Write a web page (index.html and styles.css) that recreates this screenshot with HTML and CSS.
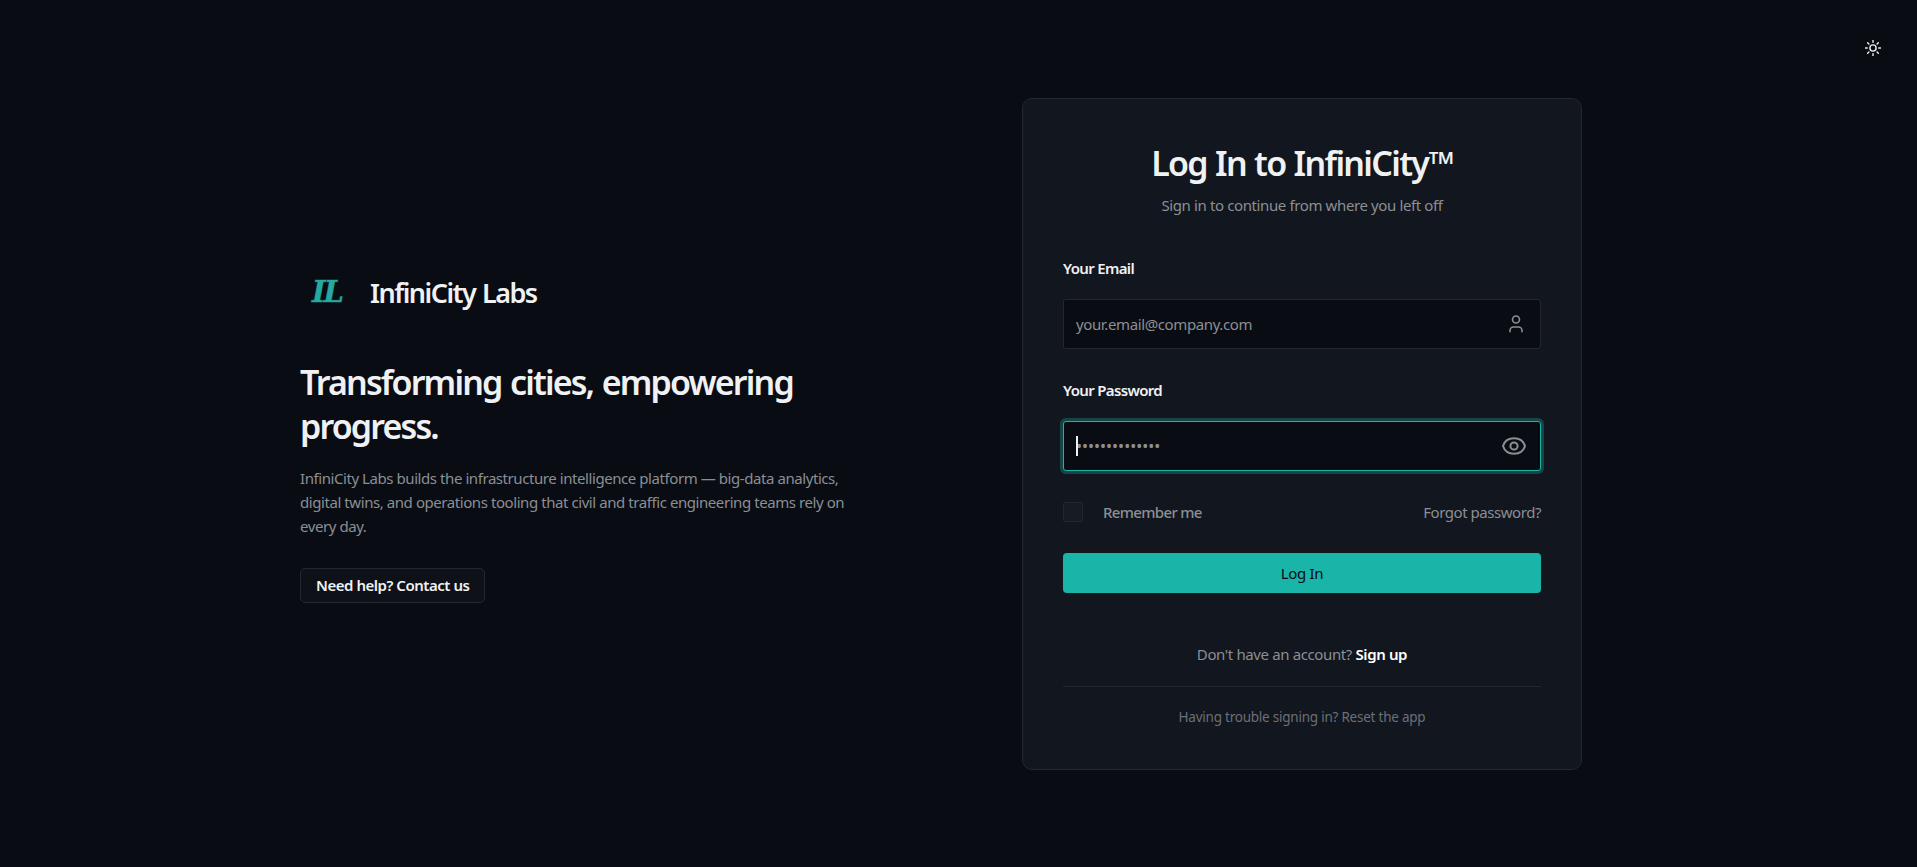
FILE: index.html
```
<!DOCTYPE html>
<html lang="en">
<head>
  <meta charset="UTF-8">
  <title>Log In - InfiniCity</title>
  <link rel="stylesheet" href="styles.css">
</head>
<body>

  <button type="button" class="theme-toggle" aria-label="Toggle theme">
    <svg width="16" height="16" viewBox="0 0 16 16" fill="none" stroke="currentColor" stroke-width="1.4" stroke-linecap="round">
      <circle cx="8" cy="8" r="3.1"/>
      <path d="M8 .5v1.700M8 13.800v1.700M.5 8h1.700M13.800 8h1.700M2.700 2.700l1.200 1.200M12.100 12.100l1.200 1.200M2.700 13.300l1.200-1.200M12.100 3.900l1.200-1.200"/>
    </svg>
  </button>

  <main class="page">
    <section class="intro">
      <div class="brand">
        <svg class="brand-logo" width="56" height="56" viewBox="0 0 56 56">
          <text x="12" y="37" textLength="32">IL</text>
        </svg>
        <span class="brand-name">InfiniCity Labs</span>
      </div>
      <h1>Transforming cities, empowering progress.</h1>
      <p>InfiniCity Labs builds the infrastructure intelligence platform — big-data analytics, digital twins, and operations tooling that civil and traffic engineering teams rely on every day.</p>
      <a class="contact" href="#">Need help? Contact us</a>
    </section>

    <section class="card">
      <h2>Log In to InfiniCity™</h2>
      <p class="subtitle">Sign in to continue from where you left off</p>

      <form>
        <label for="email">Your Email</label>
        <div class="field">
          <input type="email" id="email" placeholder="your.email@company.com">
          <svg class="icon-user" width="20" height="20" viewBox="0 0 20 20" fill="none" stroke="currentColor" stroke-width="1.6" stroke-linecap="round">
            <circle cx="10" cy="5.500" r="3.500"/>
            <path d="M4 17.700v-1.200a3.500 3.500 0 0 1 3.500-3.500h5a3.500 3.500 0 0 1 3.500 3.500v1.200"/>
          </svg>
        </div>

        <label for="password">Your Password</label>
        <div class="field field-active">
          <span class="caret"></span>
          <input type="password" id="password" placeholder="••••••••••••••">
          <svg class="icon-eye" width="24" height="24" viewBox="0 0 24 24" fill="none" stroke="currentColor" stroke-width="2">
            <path d="M1 12C2.500 7.200 6.700 4.300 12 4.300S21.500 7.200 23 12C21.500 16.800 17.300 19.700 12 19.700S2.500 16.800 1 12z"/>
            <circle cx="12" cy="12" r="3.600"/>
          </svg>
        </div>

        <div class="options">
          <label class="remember"><input type="checkbox">Remember me</label>
          <a href="#">Forgot password?</a>
        </div>

        <button type="submit" class="login-btn">Log In</button>
      </form>

      <p class="signup">Don't have an account? <a href="#">Sign up</a></p>
      <p class="trouble">Having trouble signing in? <a href="#">Reset the app</a></p>
    </section>
  </main>

</body>
</html>
```
FILE: styles.css
```
* {
  box-sizing: border-box;
}

body {
  margin: 0;
  background: #090c13;
  color: #f0f1f3;
  font-family: "Noto Sans", sans-serif;
  font-size: 15px;
  letter-spacing: -0.38px;
  line-height: 24px;
}

h1, h2, p {
  margin: 0;
}

a {
  color: inherit;
  text-decoration: none;
}

.theme-toggle {
  position: fixed;
  top: 28px;
  right: 24px;
  width: 40px;
  height: 40px;
  padding: 0;
  display: flex;
  align-items: center;
  justify-content: center;
  background: none;
  border: none;
  color: #f0f1f3;
  cursor: pointer;
}

.page {
  min-height: 100vh;
  padding: 1px 0 0 300px;
  display: flex;
  align-items: center;
  gap: 162px;
}

.intro {
  width: 560px;
}

.brand {
  display: flex;
  align-items: center;
  gap: 14px;
  margin-bottom: 39px;
}

.brand-logo text {
  font-family: "DejaVu Serif", serif;
  font-size: 29px;
  font-style: italic;
  font-weight: bold;
  letter-spacing: 0;
  fill: #25a9a1;
  stroke: #14514f;
  stroke-width: 1px;
  paint-order: stroke;
}

.brand-name {
  font-size: 27px;
  font-weight: 600;
  letter-spacing: -1.5px;
  word-spacing: 1px;
}

.intro h1 {
  font-size: 34px;
  font-weight: 600;
  line-height: 44px;
  letter-spacing: -1.85px;
  word-spacing: 1.5px;
  margin-bottom: 18px;
}

.intro p {
  color: #8b8f94;
  letter-spacing: -0.43px;
  margin-bottom: 30px;
}

.contact {
  display: inline-block;
  padding: 4px 15px 5px;
  background: #0e1118;
  border: 1px solid #23272e;
  border-radius: 5px;
  font-weight: 600;
  letter-spacing: -0.47px;
}

.card {
  width: 560px;
  height: 672px;
  padding: 40px 40px 0;
  background: #12161e;
  border: 1px solid #23272e;
  border-radius: 10px;
}

.card h2 {
  font-size: 34px;
  font-weight: 600;
  line-height: 48px;
  letter-spacing: -1.7px;
  word-spacing: 1px;
  text-align: center;
}

.subtitle {
  margin: 6px 0 39px;
  color: #8b8f94;
  text-align: center;
}

label {
  display: block;
  font-weight: 600;
  letter-spacing: -0.66px;
}

.field {
  position: relative;
  display: flex;
  align-items: center;
  height: 50px;
  margin: 19px 0 29px;
  padding: 0 14px 0 12px;
  background: #090c13;
  border: 1px solid #23272e;
  border-radius: 3px;
  color: #8b8f94;
}

.field input {
  flex: 1;
  padding: 0;
  background: none;
  border: none;
  outline: none;
  color: #f0f1f3;
  font: inherit;
  letter-spacing: inherit;
}

.field input::placeholder {
  color: #8b8f94;
  opacity: 1;
}

#password {
  font-size: 16px;
  letter-spacing: 0;
}

.field-active {
  border-color: #1ab5a9;
  box-shadow: 0 0 0 3px rgba(26, 181, 169, 0.3);
}

.caret {
  position: absolute;
  left: 12px;
  width: 2px;
  height: 20px;
  background: #f0f1f3;
}

.options {
  display: flex;
  align-items: center;
  justify-content: space-between;
  color: #8b8f94;
  letter-spacing: -0.45px;
}

.remember {
  display: flex;
  align-items: center;
  gap: 20px;
  font-weight: 500;
}

.remember input {
  appearance: none;
  width: 20px;
  height: 20px;
  margin: 0;
  background: #171b22;
  border: 1px solid #23272e;
  border-radius: 2px;
}

.login-btn {
  width: 100%;
  height: 40px;
  margin-top: 29px;
  background: #1ab5a9;
  border: none;
  border-radius: 4px;
  color: #090c13;
  font: inherit;
  letter-spacing: -0.3px;
  cursor: pointer;
}

.signup {
  margin-top: 49px;
  padding-bottom: 20px;
  border-bottom: 1px solid #23272e;
  color: #8b8f94;
  text-align: center;
}

.signup a {
  color: #ffffff;
  font-weight: 600;
}

.trouble {
  margin-top: 18px;
  color: #6b7076;
  font-size: 13.5px;
  letter-spacing: -0.23px;
  text-align: center;
}
```
